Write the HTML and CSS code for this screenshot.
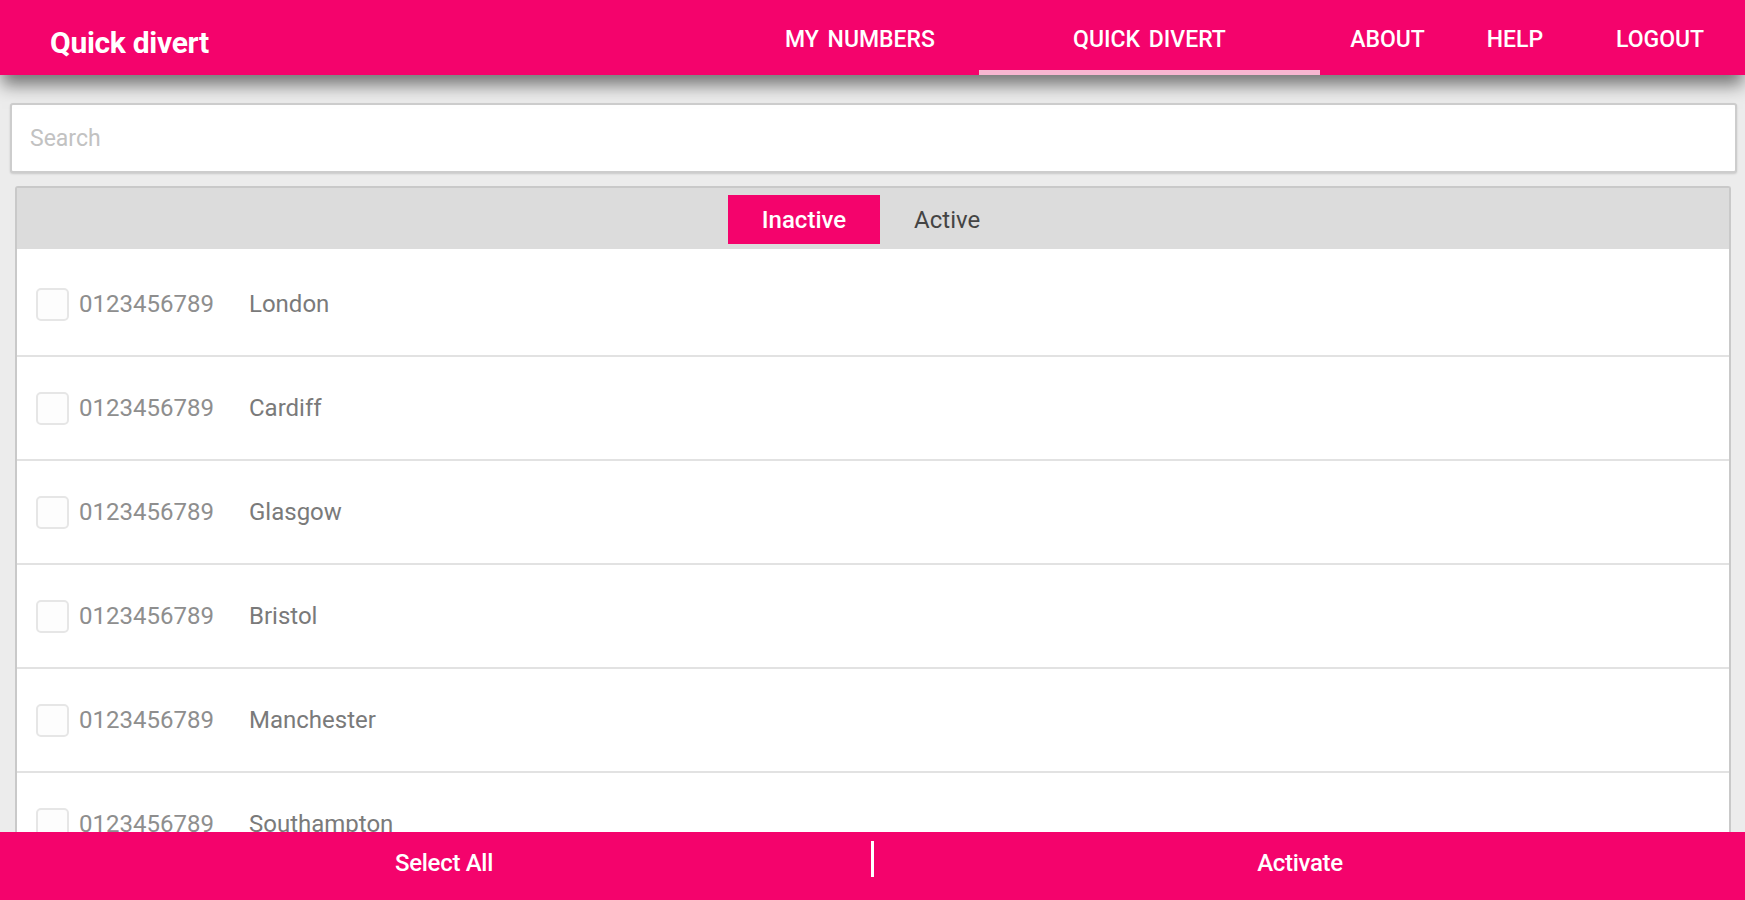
FILE: index.html
```html
<!DOCTYPE html>
<html lang="en">
<head>
<meta charset="utf-8">
<title>Quick divert</title>
<link rel="stylesheet" href="styles.css">
</head>
<body>
<div class="app">
  <header class="topbar">
    <div class="brand">Quick divert</div>
    <nav class="nav">
      <a class="nav-item w-numbers">MY NUMBERS</a>
      <a class="nav-item w-quick active">QUICK DIVERT</a>
      <a class="nav-item w-about">ABOUT</a>
      <a class="nav-item w-help">HELP</a>
      <a class="nav-item w-logout">LOGOUT</a>
    </nav>
  </header>
  <main class="content">
    <div class="search">
      <input class="search-input" type="text" placeholder="Search">
    </div>
    <section class="panel">
      <div class="panel-tabs">
        <div class="tab tab-on">Inactive</div>
        <div class="tab">Active</div>
      </div>
      <ul class="list">
        <li class="row"><span class="check"></span><span class="num">0123456789</span><span class="city">London</span></li>
        <li class="row"><span class="check"></span><span class="num">0123456789</span><span class="city">Cardiff</span></li>
        <li class="row"><span class="check"></span><span class="num">0123456789</span><span class="city">Glasgow</span></li>
        <li class="row"><span class="check"></span><span class="num">0123456789</span><span class="city">Bristol</span></li>
        <li class="row"><span class="check"></span><span class="num">0123456789</span><span class="city">Manchester</span></li>
        <li class="row"><span class="check"></span><span class="num">0123456789</span><span class="city">Southampton</span></li>
      </ul>
    </section>
  </main>
  <footer class="actions">
    <div class="action action-left">Select All</div>
    <div class="divider"></div>
    <div class="action action-right">Activate</div>
  </footer>
</div>
</body>
</html>
```
FILE: styles.css
```css
* { box-sizing: border-box; }
html, body { margin: 0; padding: 0; }
body {
  background: #ececec;
  font-family: Roboto, "Noto Sans", "Liberation Sans", sans-serif;
  overflow: hidden;
}
.app {
  height: 900px;
  display: flex;
  flex-direction: column;
}
.topbar {
  height: 75px;
  flex: 0 0 75px;
  background: #f4036c;
  display: flex;
  align-items: stretch;
  position: relative;
  z-index: 2;
  box-shadow: 0 12px 16px -2px rgba(0,0,0,0.5);
}
.brand {
  color: #fff;
  font-size: 30px;
  font-weight: 700;
  padding-left: 50px;
  padding-top: 9px;
  display: flex;
  align-items: center;
  letter-spacing: -0.3px;
}
.nav {
  margin-left: auto;
  display: flex;
  align-items: stretch;
}
.nav-item {
  color: #fff;
  font-size: 23px;
  font-weight: 500;
  display: flex;
  align-items: center;
  justify-content: center;
  padding-top: 3px;
  word-spacing: 3px;
}
.nav-item.active { box-shadow: inset 0 -5px 0 #f8b6d1; }
.w-numbers { width: 238px; }
.w-quick { width: 341px; }
.w-about { width: 135px; }
.w-help { width: 120px; }
.w-logout { width: 170px; }

.content {
  flex: 1 1 auto;
  overflow: hidden;
  padding: 28px 8px 0 10px;
}
.search {
  height: 70px;
  background: #fff;
  border: 2px solid #cdcdcd;
  border-radius: 3px;
  box-shadow: 0 1px 2px rgba(0,0,0,0.15);
  display: flex;
  align-items: center;
}
.search-input {
  border: 0;
  outline: none;
  width: 100%;
  height: 100%;
  background: transparent;
  padding: 0 0 0 18px;
  font-family: Roboto, "Noto Sans", sans-serif;
  font-size: 23px;
  color: #555;
}
.search-input::placeholder { color: #c2c2c2; }

.panel {
  margin: 13px 6px 0 5px;
  background: #fff;
  border: 2px solid #c9c9c9;
  border-bottom: 0;
  border-radius: 3px 3px 0 0;
}
.panel-tabs {
  height: 61px;
  background: #dcdcdc;
  display: flex;
  justify-content: center;
  align-items: flex-start;
  padding-top: 7px;
  padding-right: 4px;
}
.tab {
  height: 49px;
  padding: 0 34px;
  display: flex;
  align-items: center;
  justify-content: center;
  font-size: 24px;
  color: #444;
}
.tab-on {
  background: #f4036c;
  color: #fff;
  font-weight: 500;
}
.list {
  list-style: none;
  margin: 0;
  padding: 4px 0 0 0;
}
.row {
  height: 104px;
  border-bottom: 2px solid #e2e2e2;
  display: flex;
  align-items: center;
  padding-left: 19px;
}
.check {
  width: 33px;
  height: 33px;
  border: 2px solid #e6e6e6;
  border-radius: 5px;
  background: #fdfdfd;
  flex: 0 0 auto;
}
.num {
  margin-left: 10px;
  width: 170px;
  font-size: 24px;
  color: #8e8e8e;
}
.city {
  font-size: 24px;
  color: #7a7a7a;
}

.actions {
  flex: 0 0 68px;
  height: 68px;
  background: #f4036c;
  display: grid;
  grid-template-columns: 1fr 3px 1fr;
  align-items: center;
  padding-bottom: 6px;
  position: relative;
  z-index: 2;
}
.action {
  color: #fff;
  font-size: 24px;
  font-weight: 500;
  text-align: center;
  letter-spacing: -0.3px;
}
.action-left { padding-left: 17px; }
.action-right { padding-right: 19px; }
.divider {
  width: 3px;
  height: 36px;
  background: #fff;
  margin-top: -8px;
}
```
